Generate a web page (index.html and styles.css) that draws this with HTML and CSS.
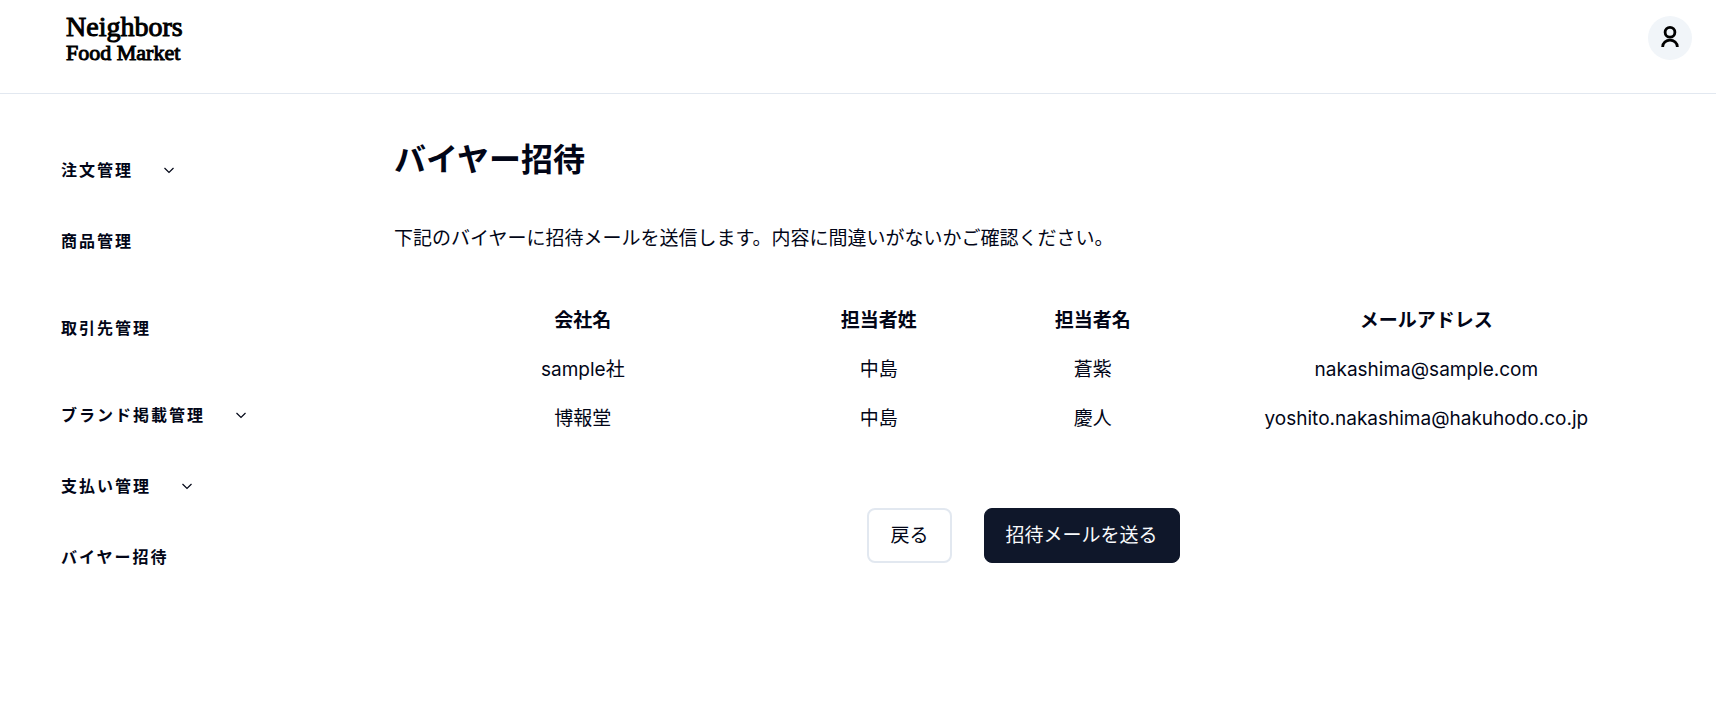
FILE: index.html
```html
<!DOCTYPE html>
<html lang="ja">
<head>
<meta charset="utf-8">
<meta name="viewport" content="width=device-width, initial-scale=1">
<title>バイヤー招待</title>
<link rel="stylesheet" href="styles.css">
</head>
<body>
<header class="header">
  <a class="logo" href="#">
    <span class="logo-top">Neighbors</span>
    <span class="logo-bottom">Food Market</span>
  </a>
  <button class="avatar" type="button" aria-label="アカウント">
    <svg width="24" height="24" viewBox="0 0 24 24" fill="none" stroke="currentColor" stroke-width="2.8" aria-hidden="true"><circle cx="12" cy="6.3" r="4.9"/><path d="M4.700 21v-.3a7.300 6.600 0 0 1 14.600 0v.3"/></svg>
  </button>
</header>
<div class="layout">
  <nav class="sidebar">
    <ul class="menu">
      <li class="menu-item"><button class="menu-link" type="button">注文管理<svg class="chevron" viewBox="0 0 16 16" aria-hidden="true"><path d="M3.500 6 8 10.500 12.500 6"/></svg></button></li>
      <li class="menu-item menu-item-spaced"><a class="menu-link" href="#">商品管理</a></li>
      <li class="menu-item menu-item-spaced"><a class="menu-link" href="#">取引先管理</a></li>
      <li class="menu-item"><button class="menu-link" type="button">ブランド掲載管理<svg class="chevron" viewBox="0 0 16 16" aria-hidden="true"><path d="M3.500 6 8 10.500 12.500 6"/></svg></button></li>
      <li class="menu-item"><button class="menu-link" type="button">支払い管理<svg class="chevron" viewBox="0 0 16 16" aria-hidden="true"><path d="M3.500 6 8 10.500 12.500 6"/></svg></button></li>
      <li class="menu-item"><a class="menu-link" href="#">バイヤー招待</a></li>
    </ul>
  </nav>
  <main class="content">
    <h1 class="title">バイヤー招待</h1>
    <p class="lead">下記のバイヤーに招待メールを送信します。内容に間違いがないかご確認ください。</p>
    <table class="buyers">
      <colgroup><col class="col-company"><col class="col-name"><col class="col-name"><col class="col-mail"></colgroup>
      <thead>
        <tr><th scope="col">会社名</th><th scope="col">担当者姓</th><th scope="col">担当者名</th><th scope="col">メールアドレス</th></tr>
      </thead>
      <tbody>
        <tr><td>sample社</td><td>中島</td><td>蒼紫</td><td>nakashima@sample.com</td></tr>
        <tr><td>博報堂</td><td>中島</td><td>慶人</td><td>yoshito.nakashima@hakuhodo.co.jp</td></tr>
      </tbody>
    </table>
    <div class="actions">
      <button class="btn btn-outline" type="button">戻る</button>
      <button class="btn btn-primary" type="button">招待メールを送る</button>
    </div>
  </main>
</div>
</body>
</html>
```
FILE: styles.css
```css
* {
  box-sizing: border-box;
}

body {
  margin: 0;
  background: #fff;
  color: #020617;
  font-family: Inter, "Noto Sans CJK JP", sans-serif;
  font-size: 19px;
  line-height: 29px;
}

button {
  font: inherit;
  color: inherit;
  cursor: pointer;
}

a {
  color: inherit;
  text-decoration: none;
}

.header {
  display: flex;
  align-items: flex-start;
  justify-content: space-between;
  padding: 12px 24px 29px 66px;
  border-bottom: 1px solid #e2e8f0;
}

.logo {
  display: flex;
  flex-direction: column;
  color: #000;
  font-family: "Liberation Serif", serif;
  -webkit-text-stroke: 1px #000;
}

.logo-top {
  font-size: 28px;
  line-height: 30px;
}

.logo-bottom {
  font-size: 22px;
  line-height: 22px;
}

.avatar {
  display: flex;
  align-items: center;
  justify-content: center;
  width: 44px;
  height: 44px;
  margin-top: 4px;
  padding: 0;
  border: 0;
  border-radius: 50%;
  background: #f1f5f9;
  color: #000;
}

.layout {
  display: flex;
}

.sidebar {
  flex: 0 0 394px;
  padding: 40px 0 0 61px;
}

.menu {
  margin: 0;
  padding: 0;
  list-style: none;
}

.menu-item {
  display: flex;
  align-items: center;
  height: 71px;
}

.menu-item-spaced {
  margin-bottom: 16px;
}

.menu-link {
  display: flex;
  align-items: center;
  gap: 28px;
  padding: 0;
  border: 0;
  background: none;
  font-size: 16px;
  font-weight: 700;
  line-height: 24px;
  letter-spacing: 2px;
}

.chevron {
  width: 16px;
  height: 16px;
  fill: none;
  stroke: currentColor;
  stroke-width: 1.2;
}

.content {
  flex: 1;
  padding: 42px 63px 48px 0;
}

.title {
  margin: 0 0 40px;
  font-size: 32px;
  font-weight: 700;
  line-height: 48px;
}

.lead {
  margin: 0 0 43px;
}

.buyers {
  width: 100%;
  table-layout: fixed;
  border-collapse: collapse;
  text-align: center;
}

.buyers th,
.buyers td {
  padding: 10px 0;
}

.buyers th {
  font-weight: 700;
}

.col-company {
  width: 30%;
}

.col-name {
  width: 17%;
}

.col-mail {
  width: 36%;
}

.actions {
  display: flex;
  justify-content: center;
  gap: 32px;
  margin-top: 65px;
}

.btn {
  padding: 12px 21px;
  border: 1px solid #e2e8f0;
  border-radius: 8px;
  background: #fff;
}

.btn-outline {
  padding: 11px 21px;
  border-width: 2px;
}

.btn-primary {
  border-color: #0f172a;
  background: #0f172a;
  color: #f8fafc;
}
```
